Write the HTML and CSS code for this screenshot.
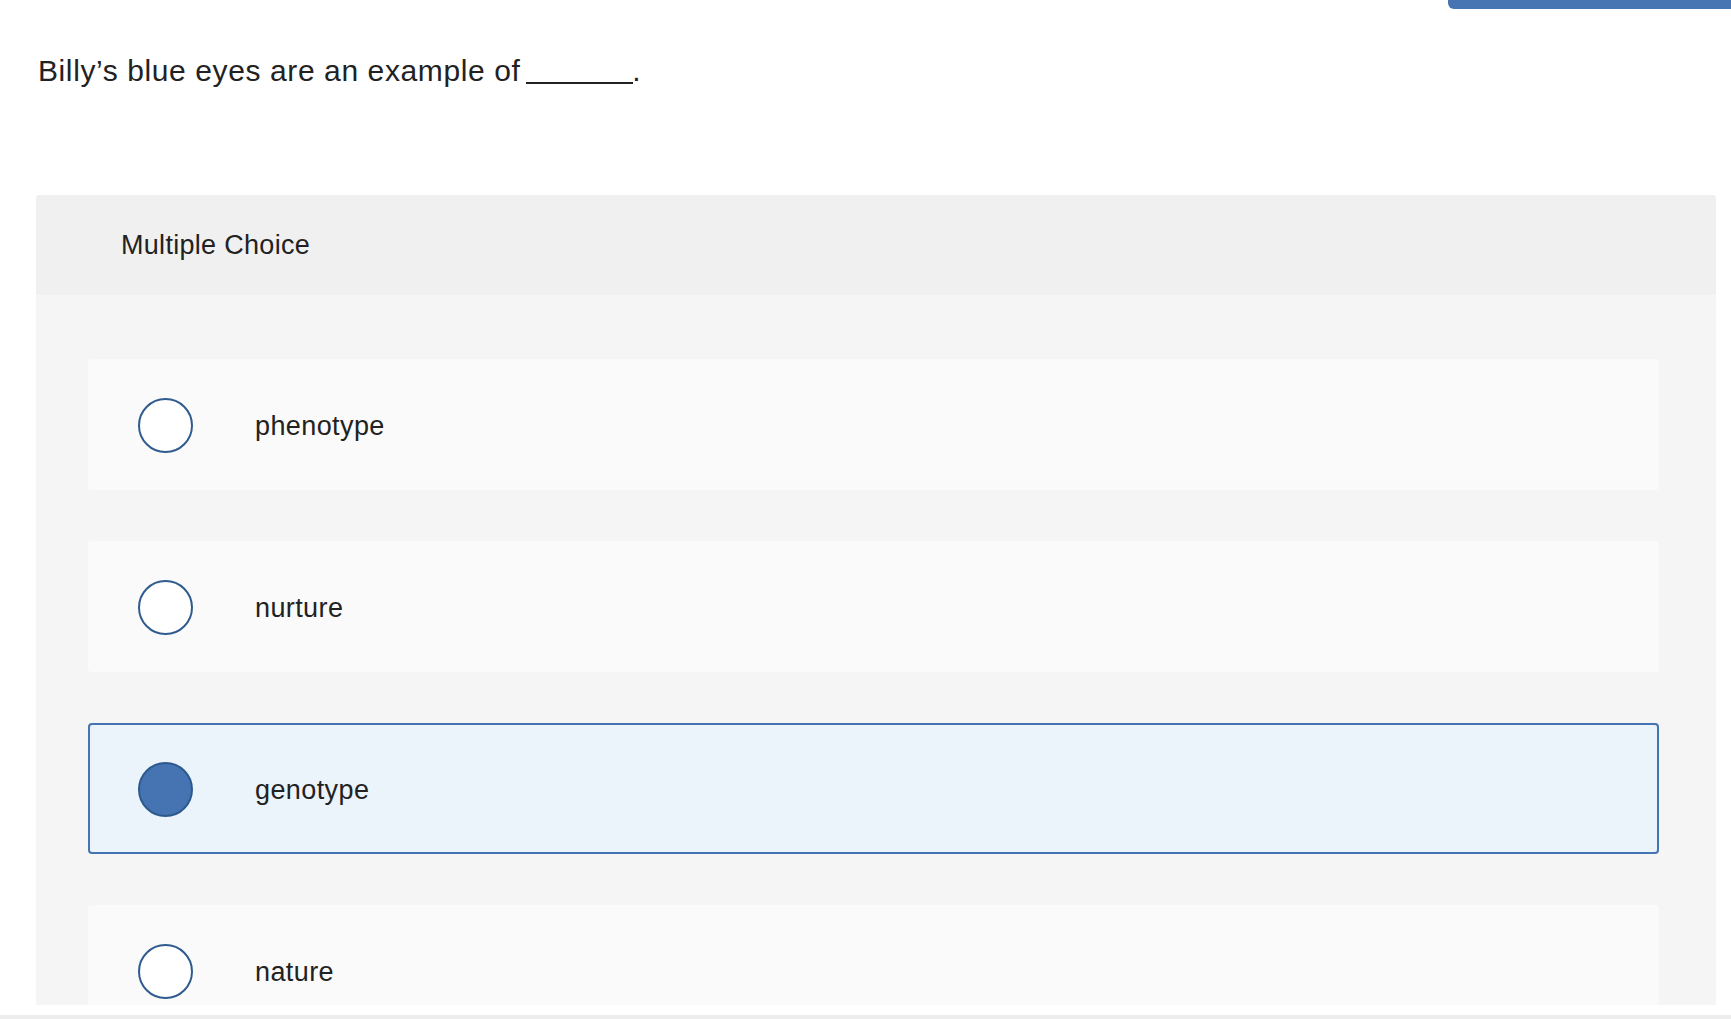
FILE: index.html
```html
<!DOCTYPE html>
<html lang="en">
<head>
<meta charset="utf-8">
<title>Multiple Choice</title>
<link rel="stylesheet" href="styles.css">
</head>
<body>
<div class="viewport">
  <div class="topbar"><div class="topbar-btn"></div></div>
  <main class="content">
    <p class="question">Billy’s blue eyes are an example of <span class="blank"></span>.</p>
    <section class="panel">
      <header class="panel-head">Multiple Choice</header>
      <div class="panel-body">
        <div class="option"><span class="radio"></span><span class="label">phenotype</span></div>
        <div class="option"><span class="radio"></span><span class="label">nurture</span></div>
        <div class="option selected"><span class="radio"></span><span class="label">genotype</span></div>
        <div class="option"><span class="radio"></span><span class="label">nature</span></div>
      </div>
    </section>
  </main>
</div>
<div class="footer-gap"></div>
<div class="footer-line"></div>
</body>
</html>
```
FILE: styles.css
```css
html, body {
  margin: 0;
  padding: 0;
  background: #ffffff;
}
body {
  font-family: "Liberation Sans", Arial, sans-serif;
  color: #222222;
}
.viewport {
  height: 1005px;
  overflow: hidden;
}
.topbar {
  display: flex;
  justify-content: flex-end;
  height: 9px;
}
.topbar-btn {
  width: 283px;
  height: 9px;
  background: #4775b3;
  border-bottom-left-radius: 6px;
}
.content {
  padding: 0 15px 0 36px;
}
.question {
  margin: 45px 0 0 2px;
  font-size: 30px;
  line-height: 34px;
  letter-spacing: 0.6px;
  color: #222222;
}
.blank {
  display: inline-block;
  width: 107px;
  height: 1px;
  border-bottom: 2px solid #222222;
  vertical-align: -3px;
  margin-left: -3px;
  margin-right: -1px;
}
.panel {
  margin-top: 107px;
  background: #f5f5f5;
  border-radius: 3px 3px 0 0;
}
.panel-head {
  height: 100px;
  line-height: 101px;
  padding-left: 85px;
  background: #f0f0f0;
  border-radius: 3px 3px 0 0;
  font-size: 27px;
  letter-spacing: 0.3px;
  color: #222222;
}
.panel-body {
  display: flex;
  flex-direction: column;
  gap: 51px;
  padding: 64px 57px 60px 52px;
}
.option {
  box-sizing: border-box;
  height: 131px;
  display: flex;
  align-items: center;
  padding-left: 48px;
  background: #fafafa;
  border: 2px solid transparent;
  border-radius: 4px;
}
.option.selected {
  background: #ebf3fb;
  border-color: #4673b1;
}
.radio {
  box-sizing: border-box;
  width: 55px;
  height: 55px;
  flex: none;
  margin-top: 2px;
  border-radius: 50%;
  border: 2px solid #2f5b8e;
  background: #ffffff;
}
.option.selected .radio {
  background: #4673b1;
  border-color: #2d5a8e;
}
.label {
  margin-left: 62px;
  padding-top: 4px;
  font-size: 27px;
  line-height: 31px;
  letter-spacing: 0.4px;
  color: #222222;
}
.footer-gap {
  height: 10px;
}
.footer-line {
  height: 4px;
  background: #ededed;
}
```
